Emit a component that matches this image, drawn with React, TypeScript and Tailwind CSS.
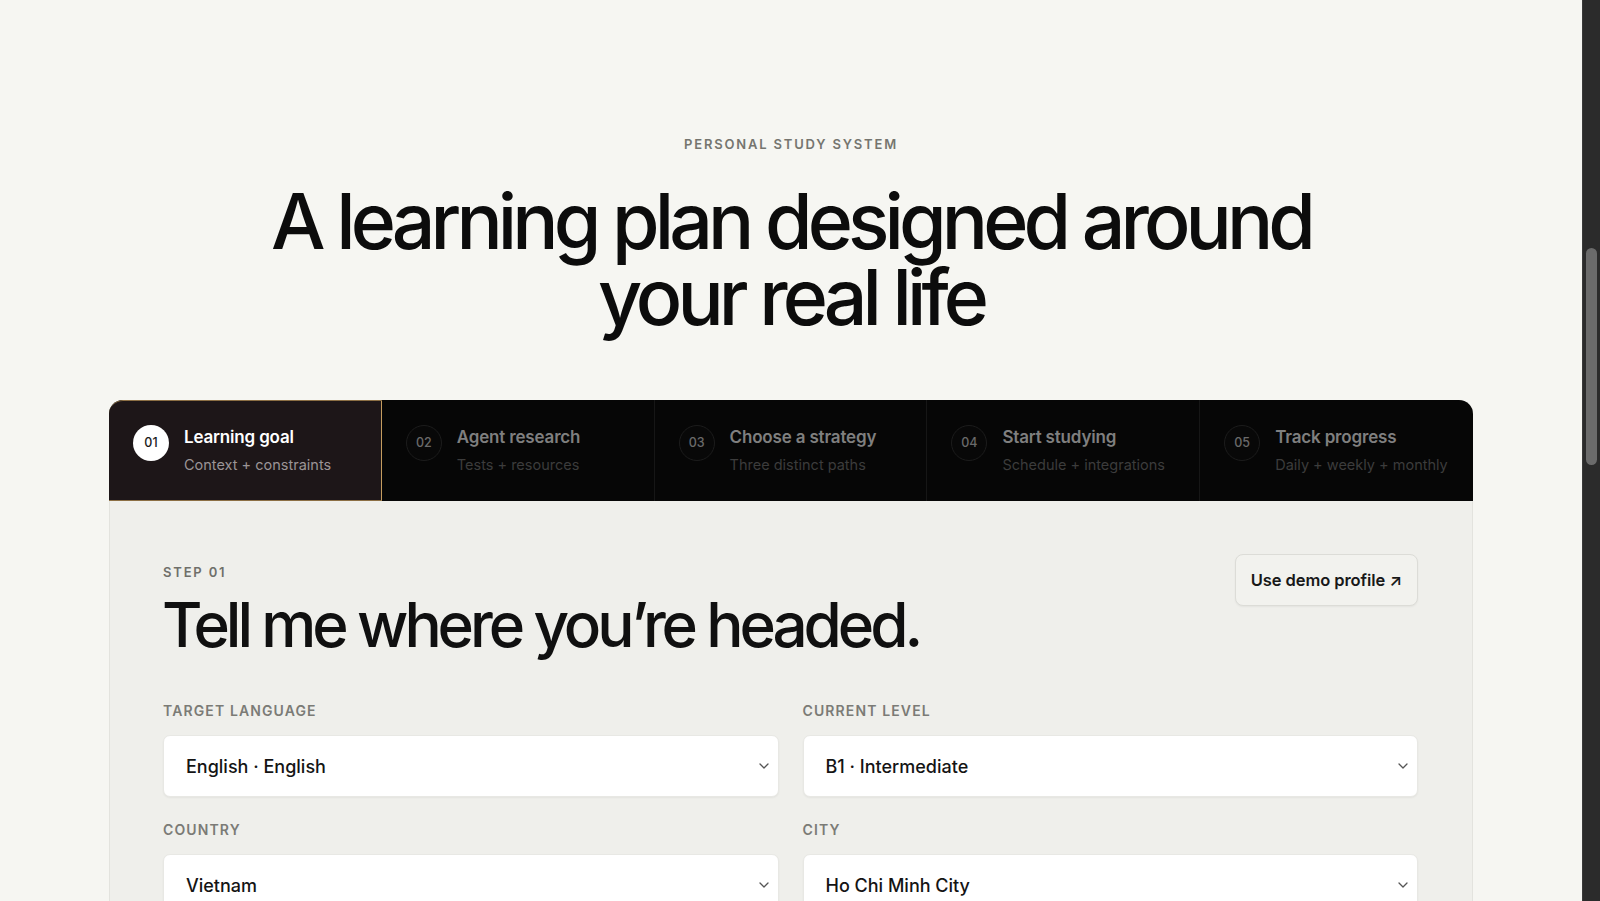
import React from "react";

const tabs = [
  { n: "01", t: "Learning goal", s: "Context + constraints" },
  { n: "02", t: "Agent research", s: "Tests + resources" },
  { n: "03", t: "Choose a strategy", s: "Three distinct paths" },
  { n: "04", t: "Start studying", s: "Schedule + integrations" },
  { n: "05", t: "Track progress", s: "Daily + weekly + monthly" },
];

function Chevron() {
  return (
    <svg width="10" height="6" viewBox="0 0 10 6" fill="none">
      <path d="M1 1l4 4 4-4" stroke="#555" strokeWidth="1.3" strokeLinecap="round" strokeLinejoin="round" />
    </svg>
  );
}

function Field({ label, value }: { label: string; value: string }) {
  return (
    <div className="flex flex-col">
      <div className="text-[14px] leading-[20px] font-semibold tracking-[0.08em] text-[#7b7b76] uppercase">{label}</div>
      <div className="mt-[14px] h-[62px] bg-white rounded-[7px] border border-[#e8e8e4] shadow-[0_1px_2px_rgba(0,0,0,0.05)] flex items-center justify-between pl-[22px] pr-[9px]">
        <span className="text-[18px] font-medium text-[#141414]">{value}</span>
        <Chevron />
      </div>
    </div>
  );
}

export default function App() {
  return (
    <div className="h-[901px] w-full overflow-hidden flex font-['Inter',sans-serif] antialiased">
      <main className="flex-1 bg-[#f6f6f2] pt-[136px]">
        <p className="text-center text-[13px] leading-[16px] font-semibold tracking-[0.14em] text-[#75756f]">
          PERSONAL STUDY SYSTEM
        </p>
        <h1 className="mt-[31px] flex flex-col items-center text-center text-[77px] leading-[76px] font-medium tracking-[-0.064em] text-[#0c0c0c]">
          <span>A learning plan designed around</span>
          <span>your real life</span>
        </h1>
        <section className="mx-auto mt-[65px] w-[1364px]">
          <div className="grid grid-cols-5 h-[101px] bg-[#060606] rounded-t-[14px] overflow-hidden">
            {tabs.map((tab, i) => {
              const active = i === 0;
              return (
                <div
                  key={tab.n}
                  className={
                    active
                      ? "flex items-center pl-[24px] bg-[#1d1618] border-y border-r border-[#8c6f44] border-r-[#c49c5f] rounded-tl-[14px]"
                      : i < 4
                      ? "flex items-center pl-[24px] border-r border-[#161616]"
                      : "flex items-center pl-[24px]"
                  }
                >
                  <div className="flex items-start gap-[15px]">
                    <div
                      className={
                        active
                          ? "-mt-px w-[36px] h-[36px] rounded-full bg-white text-[#1a1a1a] flex items-center justify-center text-[12.5px] font-medium shrink-0"
                          : "-mt-px w-[36px] h-[36px] rounded-full border border-[#1c1c1c] bg-[#080808] text-[#6a6a6a] flex items-center justify-center text-[12.5px] font-medium shrink-0"
                      }
                    >
                      {tab.n}
                    </div>
                    <div className="flex flex-col">
                      <span className={active ? "text-[17px] leading-[22px] font-semibold tracking-[-0.01em] text-white" : "text-[17px] leading-[22px] font-semibold tracking-[-0.01em] text-[#7f7f7f]"}>
                        {tab.t}
                      </span>
                      <span className={active ? "mt-[7px] text-[14.5px] leading-[20px] text-[#9b9496]" : "mt-[7px] text-[14.5px] leading-[20px] text-[#3c3c3c]"}>
                        {tab.s}
                      </span>
                    </div>
                  </div>
                </div>
              );
            })}
          </div>
          <div className="bg-[#efefeb] border-x border-[#e3e3de] pl-[53px] pr-[54px] pt-[53px] pb-[80px]">
            <div className="flex items-start justify-between">
              <div className="flex flex-col">
                <span className="mt-[10px] text-[13px] leading-[16px] font-semibold tracking-[0.14em] text-[#6f6f6a]">STEP 01</span>
                <h2 className="mt-[14px] -ml-px text-[62px] leading-[62px] font-medium tracking-[-0.066em] text-[#101010]">
                  Tell me where you’re headed.
                </h2>
              </div>
              <button className="h-[52px] px-[15px] rounded-[8px] border border-[#dcdcd7] bg-[#f2f2ee] shadow-[0_1px_2px_rgba(0,0,0,0.05)] text-[16.5px] font-semibold tracking-[-0.005em] text-[#181818]">
                Use demo profile ↗
              </button>
            </div>
            <div className="mt-[45px] grid grid-cols-2 gap-x-[24px] gap-y-[23px]">
              <Field label="Target language" value="English · English" />
              <Field label="Current level" value="B1 · Intermediate" />
              <Field label="Country" value="Vietnam" />
              <Field label="City" value="Ho Chi Minh City" />
            </div>
          </div>
        </section>
      </main>
      <div className="w-[18px] shrink-0 bg-[#2b2b2b] border-l border-[#3a3a3a] pt-[248px] pl-[3px] pr-[3px]">
        <div className="h-[217px] w-[11px] rounded-full bg-[#6b6b6b]" />
      </div>
    </div>
  );
}
